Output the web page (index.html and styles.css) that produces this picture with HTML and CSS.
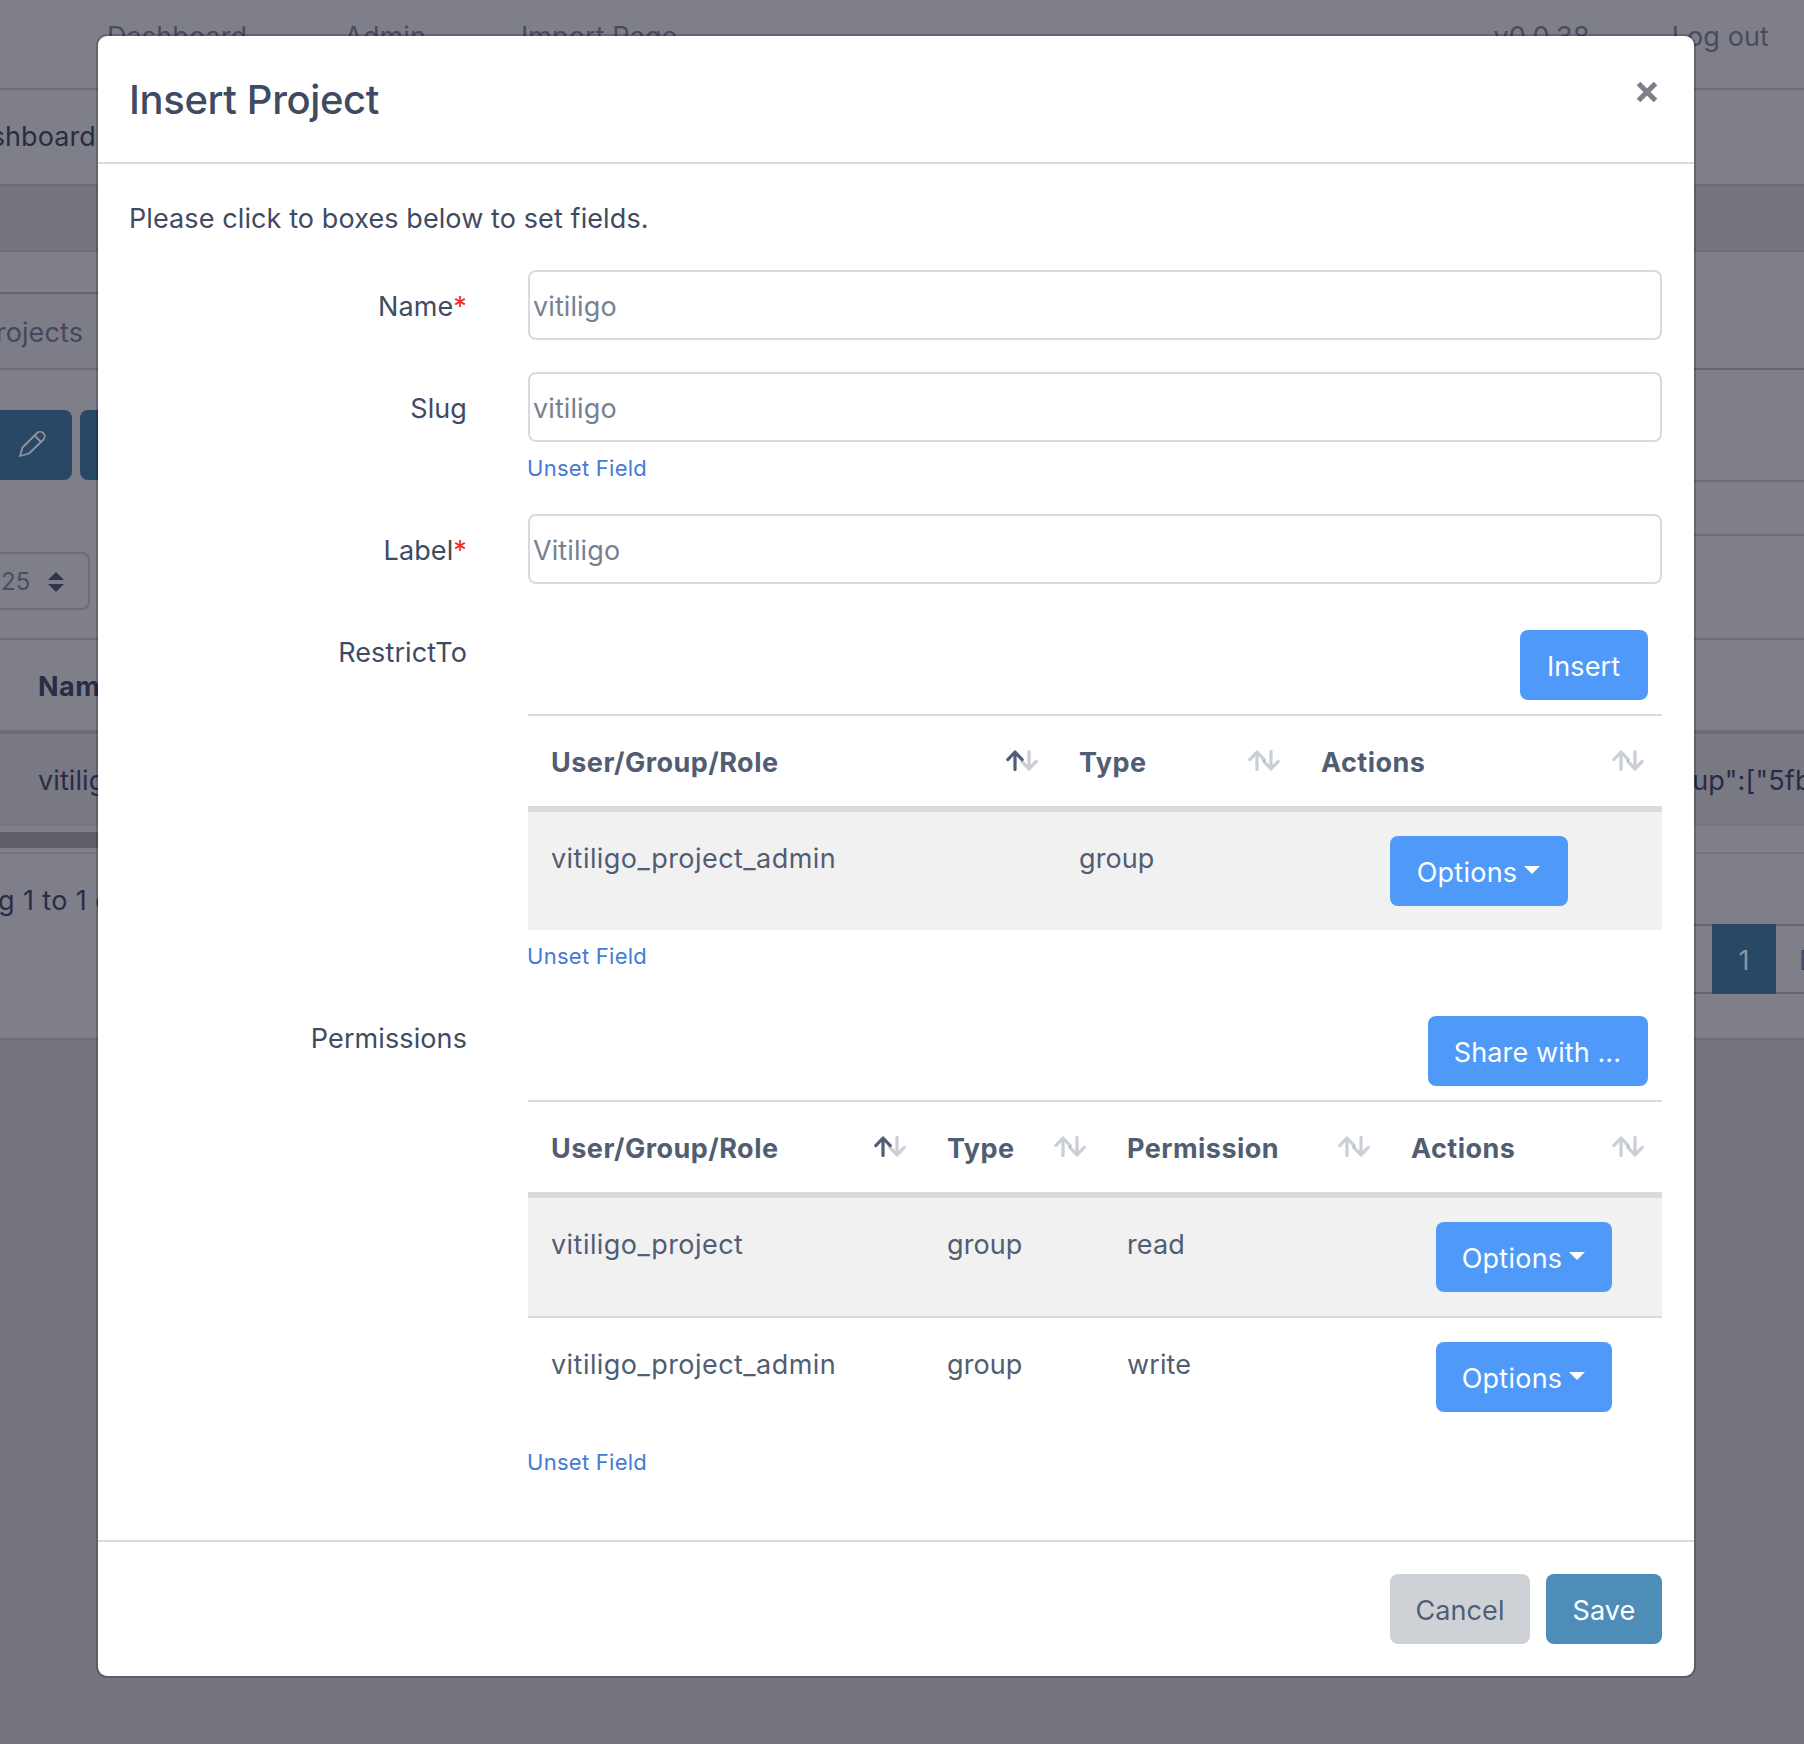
FILE: index.html
```html
<!DOCTYPE html>
<html lang="en">
<head>
<meta charset="utf-8">
<title>Insert Project</title>
<link rel="stylesheet" href="styles.css">
</head>
<body>
<svg class="symbols" aria-hidden="true">
  <symbol id="sort" viewBox="0 0 32 21">
    <path class="up" d="M9 19.5V2M1.8 9.6L9 2l7.2 7.6"/>
    <path class="down" d="M23 1.5V19M15.8 11.4L23 19l7.2-7.6"/>
  </symbol>
</svg>

<div class="page">
  <nav class="navbar">
    <a class="nav-dashboard">Dashboard</a>
    <a class="nav-admin">Admin</a>
    <a class="nav-import">Import Page</a>
    <span class="nav-version">v0.0.38</span>
    <a class="nav-logout">Log out</a>
  </nav>
  <div class="breadcrumb"><span>Dashboard</span></div>
  <div class="band"></div>
  <main class="panel">
    <div class="side-left">
      <div class="tab"><span>Projects</span></div>
      <div class="toolbar">
        <button class="tool"><svg class="pencil" viewBox="0 0 28 28"><path d="M2 26l2.5-8.500L19 3a4.600 4.600 0 0 1 6.500 6.500L11 23.500zM16.500 5.500l6.500 6.500"/></svg></button>
        <button class="tool"></button>
      </div>
      <div class="length"><span>25</span><svg viewBox="0 0 16 20"><path d="M8 0l8 8H0zM0 12h16l-8 8z"/></svg></div>
    </div>
    <div class="side-right">
      <div class="line-a"></div>
      <div class="line-b"></div>
      <div class="line-c"></div>
    </div>
  </main>
  <div class="list-head">Name</div>
  <div class="list-row"><span>vitiligo</span><span class="json">"group":["5fbe</span></div>
  <div class="scroll"><div class="thumb"></div></div>
  <footer class="list-foot">
    <div class="info">Showing 1 to 1 of 1 entries</div>
    <div class="pager"><span class="prev">Previous</span><span class="current">1</span><span class="next">Next</span></div>
  </footer>
</div>

<section class="modal">
  <header class="modal-head">
    <h1>Insert Project</h1>
    <svg class="close" viewBox="0 0 22 24"><path d="M2.500 3.500l17 17M19.500 3.500l-17 17"/></svg>
  </header>
  <div class="modal-body">
    <p class="hint">Please click to boxes below to set fields.</p>
    <div class="group">
      <label>Name<b>*</b></label>
      <div class="field"><div class="input">vitiligo</div></div>
    </div>
    <div class="group">
      <label>Slug</label>
      <div class="field"><div class="input">vitiligo</div><a class="unset">Unset Field</a></div>
    </div>
    <div class="group">
      <label>Label<b>*</b></label>
      <div class="field"><div class="input">Vitiligo</div></div>
    </div>
    <div class="group">
      <label>RestrictTo</label>
      <div class="field">
        <div class="actions"><button class="btn insert">Insert</button></div>
        <table>
          <colgroup><col class="w528"><col class="w242"><col></colgroup>
          <thead><tr>
            <th><div>User/Group/Role<svg class="sort asc"><use href="#sort"/></svg></div></th>
            <th><div>Type<svg class="sort"><use href="#sort"/></svg></div></th>
            <th><div>Actions<svg class="sort"><use href="#sort"/></svg></div></th>
          </tr></thead>
          <tbody>
            <tr><td class="name">vitiligo_project_admin</td><td>group</td><td class="center"><button class="btn options wide">Options<i></i></button></td></tr>
          </tbody>
        </table>
        <a class="unset">Unset Field</a>
      </div>
    </div>
    <div class="group">
      <label>Permissions</label>
      <div class="field">
        <div class="actions"><button class="btn share">Share with ...</button></div>
        <table>
          <colgroup><col class="w396"><col class="w180"><col class="w284"><col></colgroup>
          <thead><tr>
            <th><div>User/Group/Role<svg class="sort asc"><use href="#sort"/></svg></div></th>
            <th><div>Type<svg class="sort"><use href="#sort"/></svg></div></th>
            <th><div>Permission<svg class="sort"><use href="#sort"/></svg></div></th>
            <th><div>Actions<svg class="sort"><use href="#sort"/></svg></div></th>
          </tr></thead>
          <tbody>
            <tr><td class="name">vitiligo_project</td><td>group</td><td>read</td><td class="center"><button class="btn options">Options<i></i></button></td></tr>
            <tr><td class="name">vitiligo_project_admin</td><td>group</td><td>write</td><td class="center"><button class="btn options">Options<i></i></button></td></tr>
          </tbody>
        </table>
        <a class="unset">Unset Field</a>
      </div>
    </div>
  </div>
  <footer class="modal-foot">
    <button class="btn cancel">Cancel</button>
    <button class="btn save">Save</button>
  </footer>
</section>
</body>
</html>
```
FILE: styles.css
```css
* { box-sizing: border-box; }
body {
  margin: 0;
  height: 1744px;
  overflow: hidden;
  background: #757580;
  font: 27px/42px Inter, "Liberation Sans", sans-serif;
  letter-spacing: .1px;
  color: #3f4b62;
}
.symbols { display: none; }
button { font: inherit; letter-spacing: inherit; border: 0; padding: 0; }

/* Dimmed page behind the dialog */
.page { background: #7f7f89; height: 1040px; border-bottom: 2px solid #6d6d79; color: #272d47; white-space: nowrap; overflow: hidden; }
.navbar { height: 90px; border-bottom: 2px solid #6b6b77; padding: 16px 35px 0 107px; display: flex; color: #4a4b5d; }
.nav-admin { margin-left: 97px; }
.nav-import { margin-left: 95px; }
.nav-version { margin-left: auto; }
.nav-logout { margin-left: 82px; }
.breadcrumb { height: 96px; border-bottom: 2px solid #6d6d79; padding-top: 26px; }
.breadcrumb span { display: flex; justify-content: flex-end; width: 96px; }
.band { height: 66px; background: #757580; border-bottom: 2px solid #6d6d79; }
.panel { display: flex; height: 388px; border-bottom: 2px solid #6d6d79; }
.side-left, .side-right { width: 902px; }
.side-left { padding-top: 40px; }
.tab { height: 78px; border-top: 2px solid #656571; border-bottom: 2px solid #6d6d79; padding-top: 18px; background: #7d7d87; color: #45475d; }
.tab span { display: flex; justify-content: flex-end; width: 83px; }
.toolbar { display: flex; gap: 8px; padding-top: 40px; }
.tool { width: 72px; height: 70px; border-radius: 8px; background: #284866; display: flex; align-items: center; justify-content: flex-end; padding-right: 26px; }
.tool:first-child { border-radius: 0 8px 8px 0; }
.pencil { width: 28px; height: 28px; margin-top: -2px; fill: none; stroke: #92949f; stroke-width: 1.8; stroke-linejoin: round; }
.length { margin-top: 72px; width: 90px; height: 58px; border: 2px solid #6d6d79; border-left: 0; border-radius: 0 8px 8px 0; display: flex; align-items: center; padding: 2px 0 0 1px; font-size: 24px; color: #4b4d61; }
.length svg { width: 16px; height: 20px; margin-left: auto; margin-right: 24px; fill: #30354c; }
.line-a { height: 118px; border-bottom: 2px solid #656571; }
.line-b { height: 112px; border-bottom: 2px solid #6d6d79; }
.line-c { height: 54px; border-bottom: 2px solid #6d6d79; }
.list-head { height: 94px; border-bottom: 4px solid #6d6d79; padding: 26px 0 0 38px; font-weight: 700; letter-spacing: .45px; }
.list-row { height: 92px; background: #797983; border-bottom: 2px solid #727280; padding: 26px 0 0 38px; display: flex; }
.json { margin-left: 1515px; letter-spacing: .2px; }
.scroll { height: 28px; padding-top: 6px; border-bottom: 2px solid #737380; }
.thumb { width: 900px; height: 16px; background: #5f5f69; }
.list-foot { display: flex; justify-content: space-between; padding-top: 25px; }
.info { margin: 1px 0 0 -98px; letter-spacing: .4px; }
.pager { height: 70px; margin-top: 45px; width: 260px; display: flex; border: solid #656571; border-width: 2px 0; line-height: 69px; color: #4a4b5d; }
.pager span { flex: none; }
.prev { width: 168px; text-align: center; }
.current { width: 64px; margin: -2px 0; padding-top: 2px; background: #284866; color: #8d939f; text-align: center; }
.next { padding-left: 23px; }

/* Dialog */
.modal {
  position: absolute; left: 96px; top: 34px; width: 1600px; height: 1644px;
  border: 2px solid rgba(0, 0, 20, .2); border-radius: 11px;
  background: #fff; background-clip: padding-box;
  overflow: hidden;
}
.modal-head { height: 128px; border-bottom: 2px solid #d8dade; padding: 32px 36px 0 31px; display: flex; justify-content: space-between; }
h1 { margin: 0; font-size: 40px; font-weight: 500; line-height: 63px; letter-spacing: -.37px; }
.close { width: 22px; height: 24px; margin-top: 12px; fill: none; stroke: #7f7f89; stroke-width: 5.2; }
.modal-body { height: 1378px; padding: 34px 32px 0 31px; border-bottom: 2px solid #d8dade; }
.hint { margin: 0 0 30px; }
.group { display: flex; justify-content: space-between; margin-bottom: 32px; }
label { width: 338px; text-align: right; padding-top: 16px; }
label b { color: #ee2c1c; font-weight: 400; }
.field { width: 1134px; display: flex; flex-direction: column; }
.input { height: 70px; border: 2px solid #d8dade; border-radius: 8px; padding: 14px 3px; color: #768192; }
.unset { height: 40px; padding-top: 5px; margin-left: -1px; font-size: 22px; letter-spacing: .27px; color: #447bd7; }
.actions { display: flex; justify-content: flex-end; padding: 14px; }
.btn { height: 70px; border-radius: 8px; background: #4f99f8; color: #fff; padding: 4px 1px 0 0; }
.insert { width: 128px; }
.share { width: 220px; }
.options { width: 176px; display: inline-flex; align-items: center; justify-content: center; vertical-align: top; margin-right: 2px; letter-spacing: .25px; }
.options.wide { width: 178px; }
.options i { border: 8px solid transparent; border-top-color: #fff; border-bottom: 0; margin: -6px 0 0 7px; }
table { width: 100%; table-layout: fixed; border-spacing: 0; color: #515d73; }
.w528 { width: 528px; } .w242 { width: 242px; }
.w396 { width: 396px; } .w180 { width: 180px; } .w284 { width: 284px; }
th { height: 98px; border-top: 2px solid #d8dade; border-bottom: 6px solid #d8dade; padding: 3px 18px 0 23px; text-align: left; letter-spacing: .47px; }
th div { display: flex; justify-content: space-between; }
.sort { width: 32px; height: 21px; margin-top: 8px; fill: none; stroke: #515d73; stroke-width: 3.2; stroke-linecap: round; stroke-linejoin: round; --up-opacity: .3; }
.sort.asc { --up-opacity: 1; }
.up { opacity: var(--up-opacity); }
.down { opacity: .3; }
td { height: 118px; padding: 26px 23px 0; vertical-align: top; }
.name { letter-spacing: .45px; }
tr:nth-child(odd) td { background: #f1f1f1; }
tr:nth-child(2) td { border-top: 2px solid #d8dade; height: 120px; }
.center { text-align: center; padding: 24px 0 0; }
.modal-foot { display: flex; justify-content: flex-end; gap: 16px; padding: 32px 32px 0 0; }
.modal-foot .btn { padding-right: 0; }
.cancel { width: 140px; background: #ced2d7; color: #515d73; }
.save { width: 116px; background: #4f8db9; }
```
